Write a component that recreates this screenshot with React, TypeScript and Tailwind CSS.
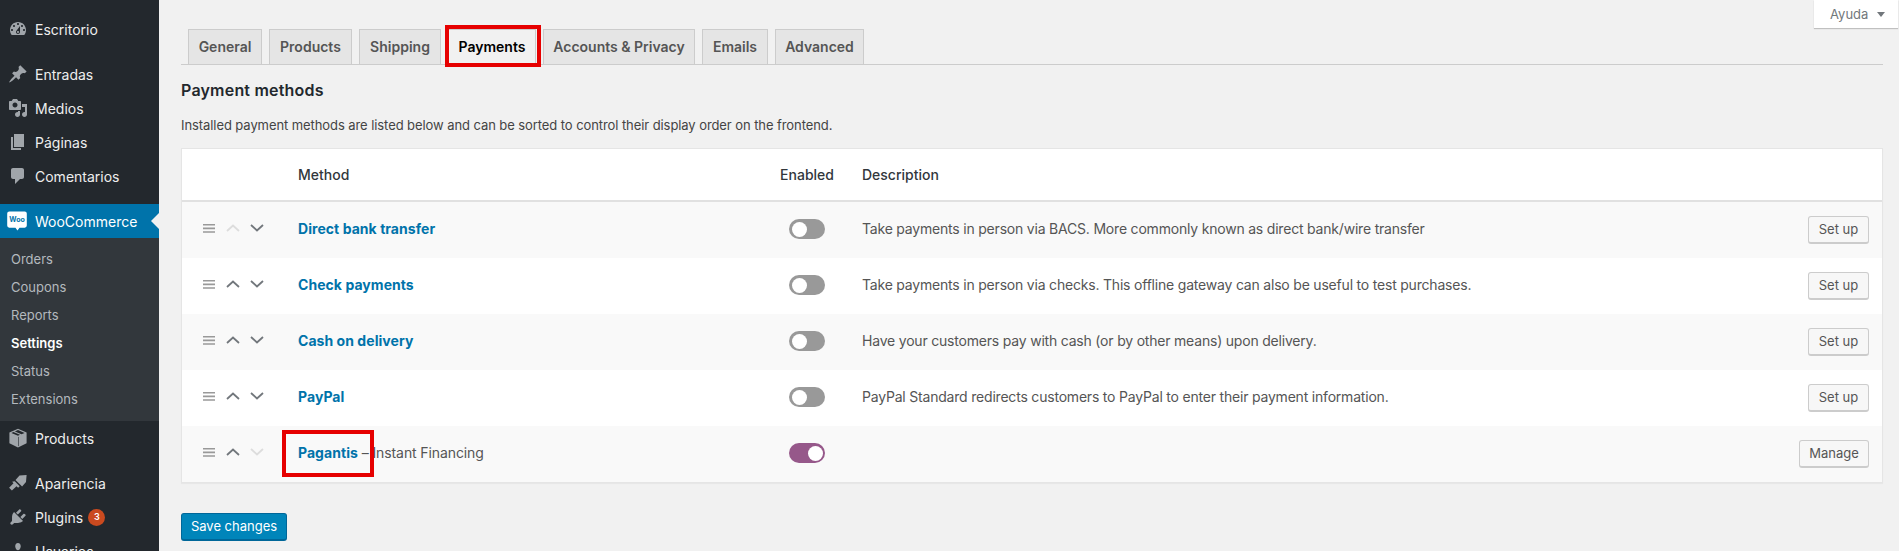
import React from "react";

const font = "[font-family:Inter,'Liberation_Sans',sans-serif]";

const paths: Record<string, string> = {
  dashboard:
    "M3.76 16h12.48c1.1-1.37 1.76-3.11 1.76-5 0-4.42-3.58-8-8-8s-8 3.58-8 8c0 1.89.66 3.63 1.76 5zM10 4c.55 0 1 .45 1 1s-.45 1-1 1-1-.45-1-1 .45-1 1-1zM6 6c.55 0 1 .45 1 1s-.45 1-1 1-1-.45-1-1 .45-1 1-1zm8 0c.55 0 1 .45 1 1s-.45 1-1 1-1-.45-1-1 .45-1 1-1zm-5.37 5.55L12 7v6c0 1.1-.9 2-2 2s-2-.9-2-2c0-.57.24-1.08.63-1.45zM4 10c.55 0 1 .45 1 1s-.45 1-1 1-1-.45-1-1 .45-1 1-1zm12 0c.55 0 1 .45 1 1s-.45 1-1 1-1-.45-1-1 .45-1 1-1zm-5 3c0-.55-.45-1-1-1s-1 .45-1 1 .45 1 1 1 1-.45 1-1z",
  pin: "M10.44 3.02l1.82-1.82 6.36 6.35-1.83 1.82c-1.05-.68-2.48-.57-3.41.36l-.75.75c-.92.93-1.04 2.35-.35 3.41l-1.83 1.82-2.41-2.41-2.8 2.79c-.42.42-3.38 2.71-3.8 2.29s1.86-3.39 2.28-3.81l2.79-2.79L4.1 9.36l1.83-1.82c1.05.69 2.48.57 3.4-.36l.75-.75c.93-.92 1.05-2.35.36-3.41z",
  media:
    "M13 11V4c0-.55-.45-1-1-1h-1.67L9 1H5L3.67 3H2c-.55 0-1 .45-1 1v7c0 .55.45 1 1 1h10c.55 0 1-.45 1-1zM7 4.5c1.38 0 2.5 1.12 2.5 2.5S8.38 9.5 7 9.5 4.5 8.38 4.5 7 5.62 4.5 7 4.5zM14 6h5v10.5c0 1.38-1.12 2.5-2.5 2.5S14 17.88 14 16.5s1.12-2.5 2.5-2.5c.17 0 .34.02.5.05V9h-3V6zm-4 8.05V13h2v3.5c0 1.38-1.12 2.5-2.5 2.5S7 17.88 7 16.5 8.12 14 9.5 14c.17 0 .34.02.5.05z",
  page: "M6 15V2h10v13H6zm-1 1h8v2H3V5h2v11z",
  comment:
    "M5 2h9c1.1 0 2 .9 2 2v7c0 1.1-.9 2-2 2h-2l-5 5v-5H5c-1.1 0-2-.9-2-2V4c0-1.1.9-2 2-2z",
  box: "M10 .8l8.6 3.6v10.9L10 19.4l-8.6-4.1V4.4L10 .8zM3.4 4.9L10 7.7l2-.85-6.6-2.8-2 .85zm3.5-1.5l6.6 2.8 3.1-1.3L10 2.1 6.9 3.4zM10 8.8v9.4l.6-.3V9.05L10 8.8z",
  brush:
    "M11.5 2.6L18.6 2l-.6 7-3.9 4.5-6.6-6.6 4-4.3zM6.7 8.2l5 5-1.6 1.6-1.6-1.6-4.6 4.4-2.8-2.8 4.4-4.6-1.4-1.4 2.6-.6z",
  plugin:
    "M13.11 4.36L9.87 7.6 8 5.73l3.24-3.24c.35-.34 1.05-.2 1.56.32.52.51.66 1.21.31 1.55zm-8 1.77l.91-1.12 9.01 9.01-1.19.84c-.71.71-2.63 1.16-3.82 1.16H6.14L4.9 17.26c-.59.59-1.54.59-2.12 0-.59-.58-.59-1.53 0-2.12l1.24-1.24v-3.88c0-1.13.4-3.19 1.09-3.89zm7.26 3.97l3.24-3.24c.34-.35 1.04-.21 1.55.31.52.51.66 1.21.31 1.55l-3.24 3.25z",
  users:
    "M10 9.25c-2.27 0-2.73-3.44-2.73-3.44C7 4.02 7.82 2 9.97 2c2.16 0 2.98 2.02 2.71 3.81 0 0-.41 3.44-2.68 3.44zm0 2.57L12.72 10c2.39 0 4.52 2.33 4.52 4.53v2.49s-3.65 1.13-7.24 1.13c-3.65 0-7.24-1.13-7.24-1.13v-2.49c0-2.25 1.94-4.48 4.47-4.48z",
};

function MenuIcon({ d }: { d: string }) {
  return (
    <svg viewBox="0 0 20 20" className="w-5 h-5 fill-[#a0a5aa] shrink-0">
      <path d={d} fillRule="evenodd" />
    </svg>
  );
}

function MenuItem({ icon, label, badge, mt }: { icon: string; label: string; badge?: string; mt?: boolean }) {
  return (
    <div className={`h-[34px] flex items-center pl-2 gap-[7px] text-[14px] text-[#eeeeee] ${mt ? "mt-[11px]" : ""}`}>
      <MenuIcon d={paths[icon]} />
      <span>{label}</span>
      {badge && (
        <span className="ml-[-2px] w-[17px] h-[17px] rounded-full bg-[#ca4a1f] text-white text-[9px] font-semibold flex items-center justify-center">
          {badge}
        </span>
      )}
    </div>
  );
}

function Sidebar() {
  const subs = ["Orders", "Coupons", "Reports", "Settings", "Status", "Extensions"];
  return (
    <aside className="w-[159px] shrink-0 bg-[#23282d] pt-[12px] h-[551px] overflow-hidden">
      <MenuItem icon="dashboard" label="Escritorio" />
      <MenuItem icon="pin" label="Entradas" mt />
      <MenuItem icon="media" label="Medios" />
      <MenuItem icon="page" label="Páginas" />
      <MenuItem icon="comment" label="Comentarios" />
      <div className="relative mt-[11px] h-[34px] bg-[#0073aa] flex items-center pl-[7px] gap-[8px] text-[14px] text-white">
        <svg viewBox="0 0 20 20" className="w-5 h-5 shrink-0">
          <path
            fill="#fff"
            d="M2.3 .5h15.4A2.1 2.1 0 0 1 19.8 2.6v12a2.1 2.1 0 0 1-2.1 2.1h-5.2l-2 2.8-2-2.8H2.3A2.1 2.1 0 0 1 .2 14.6v-12A2.1 2.1 0 0 1 2.3 .5z"
          />
          <text x="10" y="11" textAnchor="middle" fontSize="7" fontWeight="700" fill="#0073aa">
            Woo
          </text>
        </svg>
        <span>WooCommerce</span>
        <span className="absolute right-0 top-[9px] w-0 h-0 border-y-[8px] border-y-transparent border-r-[8px] border-r-[#f1f1f1]" />
      </div>
      <div className="bg-[#32373c] pt-[8px] pb-[7px]">
        {subs.map((s) => (
          <div
            key={s}
            className={`h-[28px] flex items-center pl-[11px] text-[13px] ${
              s === "Settings" ? "text-white font-semibold" : "text-[#b4b9be]"
            }`}
          >
            {s}
          </div>
        ))}
      </div>
      <MenuItem icon="box" label="Products" />
      <MenuItem icon="brush" label="Apariencia" mt />
      <MenuItem icon="plugin" label="Plugins" badge="3" />
      <MenuItem icon="users" label="Usuarios" />
    </aside>
  );
}

function Tabs() {
  const tabs: [string, string][] = [
    ["General", "w-[74px]"],
    ["Products", "w-[83px]"],
    ["Shipping", "w-[82px]"],
    ["Payments", "w-[88px]"],
    ["Accounts & Privacy", "w-[152px]"],
    ["Emails", "w-[66px]"],
    ["Advanced", "w-[89px]"],
  ];
  return (
    <div className="ml-[7px] h-[35px] flex items-stretch gap-[7px]">
      {tabs.map(([t, w]) => (
        <div
          key={t}
          className={`${w} border border-[#cccccc] border-b-0 flex items-center justify-center pb-[2px] text-[14px] font-semibold ${
            t === "Payments" ? "bg-[#f1f1f1] text-black" : "bg-[#e5e5e5] text-[#555555]"
          }`}
        >
          {t}
        </div>
      ))}
    </div>
  );
}

function Chevron({ up, faded }: { up?: boolean; faded?: boolean }) {
  return (
    <svg viewBox="0 0 14 8" className={`w-[14px] h-[8px] fill-none ${faded ? "stroke-[#dddddd]" : "stroke-[#72777c]"}`} strokeWidth="1.8">
      <path d={up ? "M1 7l6-5.5L13 7" : "M1 1l6 5.5L13 1"} />
    </svg>
  );
}

function Toggle({ on }: { on?: boolean }) {
  return (
    <div
      className={`w-[36px] h-[20px] rounded-full flex items-center p-[2.5px] mb-[2px] ${
        on ? "bg-[#96588a] justify-end" : "bg-[#999999] justify-start"
      }`}
    >
      <div className="w-[15px] h-[15px] rounded-full bg-white" />
    </div>
  );
}

type Row = { name: string; extra?: string; desc?: string; on?: boolean; btn: string; noUp?: boolean; noDown?: boolean };
const rows: Row[] = [
  { name: "Direct bank transfer", desc: "Take payments in person via BACS. More commonly known as direct bank/wire transfer", btn: "Set up", noUp: true },
  { name: "Check payments", desc: "Take payments in person via checks. This offline gateway can also be useful to test purchases.", btn: "Set up" },
  { name: "Cash on delivery", desc: "Have your customers pay with cash (or by other means) upon delivery.", btn: "Set up" },
  { name: "PayPal", desc: "PayPal Standard redirects customers to PayPal to enter their payment information.", btn: "Set up" },
  { name: "Pagantis", extra: " – Instant Financing", btn: "Manage", on: true, noDown: true },
];

function MethodRow({ r, i }: { r: Row; i: number }) {
  return (
    <div className={`h-[56px] flex items-center text-[14px] ${i % 2 === 0 ? "bg-[#f9f9f9]" : "bg-white"}`}>
      <div className="w-[116px] shrink-0 pl-[21px] pb-[4px] flex items-center">
        <svg viewBox="0 0 12 9" className="w-[12px] h-[9px] fill-[#999999]">
          <path d="M0 0h12v1.6H0zM0 3.6h12v1.6H0zM0 7.2h12v1.6H0z" />
        </svg>
        <span className="ml-[11px] flex"><Chevron up faded={r.noUp} /></span>
        <span className="ml-[10px] flex"><Chevron faded={r.noDown} /></span>
      </div>
      <div className="w-[464px] shrink-0 pb-[4px] text-[#555555] tracking-[-0.1px]">
        <span className="font-bold tracking-[0.05px] text-[#0073aa]">{r.name}</span>
        {r.extra}
      </div>
      <div className="w-[90px] shrink-0 flex justify-center">
        <Toggle on={r.on} />
      </div>
      <div className="flex-1 pl-[10px] pb-[4px] text-[#555555] tracking-[-0.2px]">{r.desc}</div>
      <button
        className={`mr-[13px] h-[28px] rounded-[3px] border border-[#cccccc] border-b-[2px] bg-[#f7f7f7] text-[#555555] text-[13px] ${
          r.btn === "Manage" ? "w-[70px]" : "w-[61px]"
        }`}
      >
        {r.btn}
      </button>
    </div>
  );
}

export default function App() {
  return (
    <div className={`relative flex w-[1899px] h-[551px] overflow-hidden bg-[#f1f1f1] ${font}`}>
      <Sidebar />
      <main className="flex-1 pl-[22px] pr-[16px] pt-[29px] min-w-0">
        <div className="border-b border-[#cccccc]">
          <Tabs />
        </div>
        <h2 className="mt-[15px] text-[16px] leading-[20px] font-semibold tracking-[0.2px] text-[#23282d]">Payment methods</h2>
        <p className="mt-[15px] text-[13px] leading-[20px] tracking-[-0.08px] text-[#444444]">
          Installed payment methods are listed below and can be sorted to control their display order on the frontend.
        </p>
        <section className="mt-[13px] border border-[#e5e5e5] bg-white shadow-[0_1px_1px_rgba(0,0,0,0.04)]">
          <div className="h-[53px] flex items-center pb-[1px] text-[14px] font-medium text-[#32373c] border-b-2 border-[#e1e1e1]">
            <div className="w-[116px]" />
            <div className="w-[464px]">Method</div>
            <div className="w-[90px] text-center">Enabled</div>
            <div className="pl-[10px]">Description</div>
          </div>
          {rows.map((r, i) => (
            <MethodRow key={r.name} r={r} i={i} />
          ))}
        </section>
        <button className="mt-[30px] w-[106px] h-[28px] rounded-[3px] bg-[#0085ba] border border-[#006799] border-b-[2px] text-white text-[13px]">
          Save changes
        </button>
      </main>

      <div className="absolute top-0 right-[1px] w-[84px] h-[28px] pt-[1px] bg-white shadow-[0_1px_1px_rgba(0,0,0,0.2)] flex items-center pl-[16px] gap-[9px] text-[13px] text-[#72777c]">
        Ayuda
        <span className="w-0 h-0 border-x-[4px] border-x-transparent border-t-[5px] border-t-[#72777c]" />
      </div>

      <div className="absolute left-[445px] top-[25px] w-[96px] h-[42px] border-4 border-[#e60000]" />
      <div className="absolute left-[282px] top-[430px] w-[92px] h-[47px] border-4 border-[#e60000]" />
    </div>
  );
}
